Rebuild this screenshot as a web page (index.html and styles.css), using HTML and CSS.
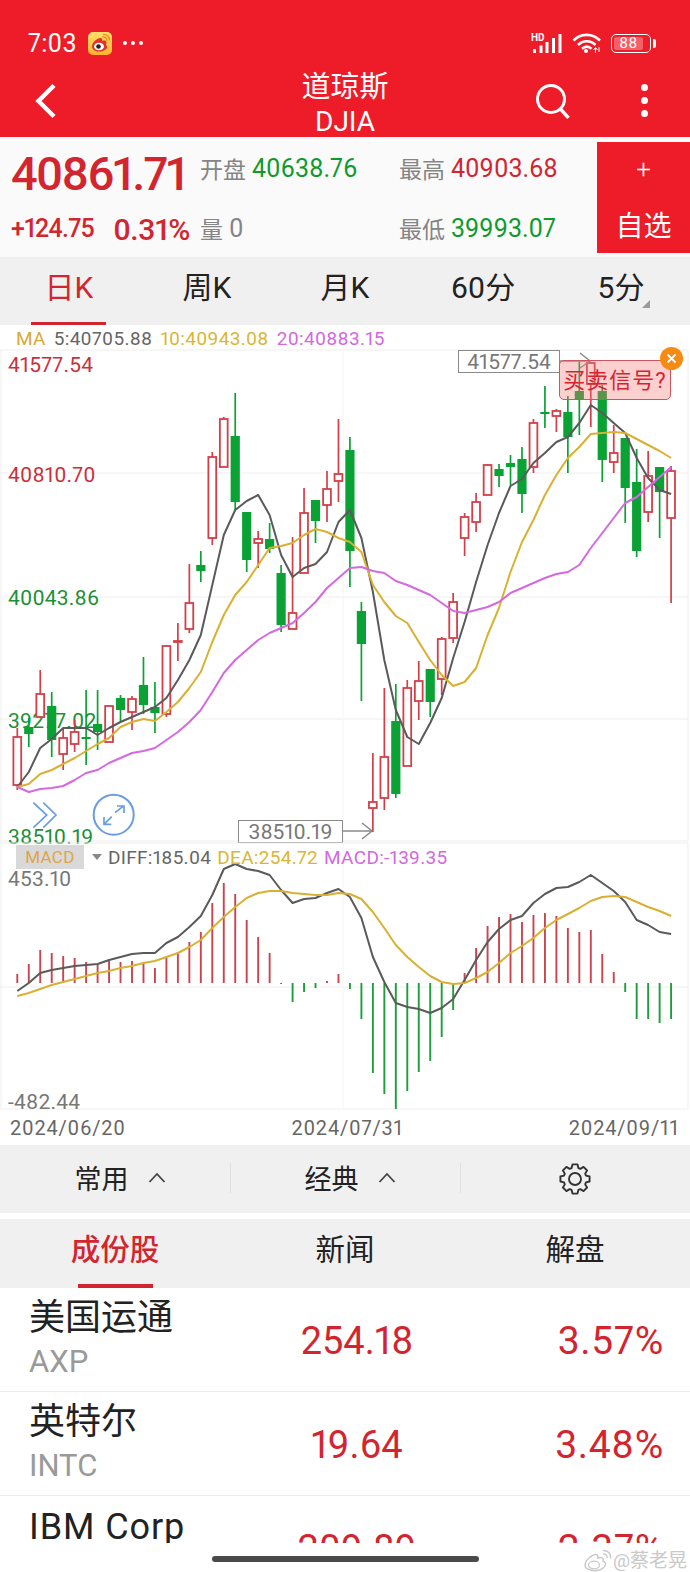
FILE: index.html
```html
<!DOCTYPE html>
<html lang="zh-CN">
  <head>
    <meta charset="UTF-8">
    <meta name="viewport" content="width=device-width, initial-scale=1.0">
    <title>道琼斯 DJIA</title>
    <link rel="stylesheet" href="styles.css">
  </head>
  <body>
    <header class="app-header">
      <div class="status-bar">
        <span class="status-time">7:03</span>
        <svg class="status-app" viewBox="0 0 24 23">
          <defs>
            <linearGradient id="tile" x1="0" y1="0" x2="0" y2="1">
              <stop offset="0" stop-color="#ffdf6b"/>
              <stop offset="1" stop-color="#ffb22c"/>
            </linearGradient>
          </defs>
          <rect width="24" height="23" rx="5" fill="url(#tile)"/>
          <path d="M4 14.5c0-4 5-8.5 8.5-8.5 1.7 0 2 1.5 1.5 3 2.400-.8 4.500-.4 4.500 1.500 0 .8-.4 1.300-.5 2 .8 1 1 1.800 1 2.500 0 2.500-4 4.500-7.500 4.500-4 0-7.500-2-7.500-5z" fill="#e2332b"/>
          <ellipse cx="11" cy="14.500" rx="5" ry="3.800" fill="#fff"/>
          <circle cx="10.500" cy="14.500" r="2.300" fill="#222"/>
          <path d="M15 5c2-.4 4 1.200 4 3.500M15.500 2.500c3.500-.4 6 2.300 6 5.500" fill="none" stroke="#f08a1c" stroke-width="1.300" stroke-linecap="round"/>
        </svg>
        <span class="status-dots">
          <i></i><i></i><i></i>
        </span>
        <span class="status-right">
          <svg class="status-signal" viewBox="0 0 34 22">
            <text class="hd-mark" x="0" y="8.500">HD</text>
            <rect x="2" y="17" width="3" height="4" fill="#fff"/>
            <rect x="8.500" y="13.500" width="3" height="7.500" fill="#fff"/>
            <rect x="14.500" y="10" width="3" height="11" fill="#fff"/>
            <rect x="21" y="6" width="3" height="15" fill="#fff"/>
            <rect x="27.500" y="2" width="3" height="19" fill="#fff"/>
          </svg>
          <svg class="status-wifi" viewBox="0 0 30 22">
            <path d="M1.500 8.500C8.500 1 20.500 1 28 8.500M6 13c5-5 12.500-5 17.500 0M10 16.800c3-2.800 6.500-2.800 9.500 0" fill="none" stroke="#fff" stroke-width="2.600"/>
            <circle cx="14" cy="19" r="2" fill="#fff"/>
            <path d="M23.500 21v-5M25.500 18l-2-2.500-2 2.500M27 15v5" fill="none" stroke="#fff" stroke-width="1"/>
          </svg>
          <span class="battery"><span class="battery-fill">88</span></span>
        </span>
      </div>
      <div class="nav-bar">
        <svg class="nav-back" viewBox="0 0 22 36">
          <path d="M19 2.500 3.500 18 19 33.500" fill="none" stroke="#fff" stroke-width="4.500"/>
        </svg>
        <div class="nav-title">
          <div class="nav-name">道琼斯</div>
          <div class="nav-code">DJIA</div>
        </div>
        <div class="nav-actions">
          <svg class="nav-search" viewBox="0 0 36 36">
            <circle cx="16" cy="16" r="13.500" fill="none" stroke="#fff" stroke-width="3"/>
            <path d="m25.500 26 8 9" fill="none" stroke="#fff" stroke-width="3.400"/>
          </svg>
          <span class="nav-more"><i></i><i></i><i></i></span>
        </div>
      </div>
    </header>

    <section class="quote">
      <div class="quote-price">40861.71</div>
      <div class="quote-cell"><span class="quote-label">开盘</span><span class="quote-value is-down">40638.76</span></div>
      <div class="quote-cell"><span class="quote-label">最高</span><span class="quote-value is-up">40903.68</span></div>
      <button class="quote-add">
        <span class="quote-add-plus">+</span>
        <span class="quote-add-text">自选</span>
      </button>
      <div class="quote-change">
        <span class="change-amount">+124.75</span>
        <span class="change-percent">0.31%</span>
      </div>
      <div class="quote-cell"><span class="quote-label">量</span><span class="quote-value is-muted">0</span></div>
      <div class="quote-cell"><span class="quote-label">最低</span><span class="quote-value is-down">39993.07</span></div>
    </section>

    <nav class="period-tabs">
      <div class="period-tab is-active">日K</div>
      <div class="period-tab">周K</div>
      <div class="period-tab">月K</div>
      <div class="period-tab">60分</div>
      <div class="period-tab has-corner">5分</div>
    </nav>

    <div class="ma-legend">
      <span class="c-gold-label">MA</span>
      <span class="c-grey">5:40705.88</span>
      <span class="c-gold">10:40943.08</span>
      <span class="c-purple">20:40883.15</span>
    </div>

    <div class="kline">
      <svg id="kline-chart" class="chart-svg" viewBox="0 349 690 492"></svg>
      <div class="price-tag tag-high">41577.54</div>
      <div class="price-tag tag-low">38510.19</div>
      <div class="signal-tip">买卖信号?</div>
      <svg class="signal-close" viewBox="0 0 23 23">
        <circle cx="11.500" cy="11.500" r="11.500" fill="#f78a12"/>
        <path d="m7.500 7.500 8 8m0-8-8 8" stroke="#fff" stroke-width="1.800"/>
      </svg>
    </div>

    <div class="macd">
      <svg id="macd-chart" class="chart-svg" viewBox="0 841 690 269"></svg>
      <div class="macd-legend">
        <span class="macd-badge">MACD</span>
        <i class="macd-caret"></i>
        <span class="c-grey">DIFF:185.04</span>
        <span class="c-gold">DEA:254.72</span>
        <span class="c-purple">MACD:-139.35</span>
      </div>
    </div>

    <div class="date-axis">
      <span>2024/06/20</span>
      <span>2024/07/31</span>
      <span>2024/09/11</span>
    </div>

    <div class="tool-bar">
      <div class="tool-item">
        常用
        <svg class="tool-caret" viewBox="0 0 18 11"><path d="m1.500 10 7.500-8 7.500 8" fill="none" stroke="#444" stroke-width="1.800"/></svg>
      </div>
      <div class="tool-item">
        经典
        <svg class="tool-caret" viewBox="0 0 18 11"><path d="m1.500 10 7.500-8 7.500 8" fill="none" stroke="#444" stroke-width="1.800"/></svg>
      </div>
      <div class="tool-item">
        <svg class="tool-gear" viewBox="0 0 32 32">
          <path id="gear-outline" fill="none" stroke="#333" stroke-width="1.900" stroke-linejoin="round"/>
          <circle cx="16" cy="16" r="6" fill="none" stroke="#333" stroke-width="1.900"/>
        </svg>
      </div>
    </div>

    <nav class="info-tabs">
      <div class="info-tab is-active">成份股</div>
      <div class="info-tab">新闻</div>
      <div class="info-tab">解盘</div>
    </nav>

    <div class="stock-list">
      <div class="stock-row">
        <div class="stock-name">
          <div class="stock-title">美国运通</div>
          <div class="stock-code">AXP</div>
        </div>
        <div class="stock-price">254.18</div>
        <div class="stock-pct">3.57%</div>
      </div>
      <div class="stock-row">
        <div class="stock-name">
          <div class="stock-title">英特尔</div>
          <div class="stock-code">INTC</div>
        </div>
        <div class="stock-price">19.64</div>
        <div class="stock-pct">3.48%</div>
      </div>
      <div class="stock-row">
        <div class="stock-name">
          <div class="stock-title is-latin">IBM Corp</div>
        </div>
        <div class="stock-price">209.89</div>
        <div class="stock-pct">2.37%</div>
      </div>
    </div>

    <footer class="page-foot">
      <div class="home-bar"></div>
      <div class="watermark">
        <svg class="watermark-logo" viewBox="0 0 30 24">
          <path d="M2 16c0-4.500 7-10.500 11-10.500 2 0 2.200 2 1.700 3.500 3-1 5.500-.5 5.500 1.700 0 .8-.4 1-.2 1.500 1.500.5 2.500 1.500 2.500 3 0 3-5 6.500-10.500 6.500C6.500 21.700 2 19.500 2 16z" fill="#fff" stroke="#c9c9c9" stroke-width="1.400"/>
          <ellipse cx="11" cy="16" rx="5.500" ry="3.800" fill="none" stroke="#c9c9c9" stroke-width="1.300"/>
          <path d="M20 5c2.500-.4 4.500 1.500 4 4M20 1.500c4.500-.6 8.500 3 7.500 8" fill="none" stroke="#c9c9c9" stroke-width="1.400"/>
        </svg>
        <span class="watermark-text">@蔡老晃</span>
      </div>
    </footer>

    <script src="chart.js"></script>
  </body>
</html>
```

FILE: styles.css
```css
:root {
  --red: #ed1c28;
  --up: #d3252f;
  --down: #0f9a2e;
  --grey: #666666;
  --gold: #d9b735;
  --purple: #d369e0;
  --panel: #f0f0f0;
  --line: #ececec;
}

html, body {
  margin: 0;
  padding: 0;
}

body {
  width: 690px;
  height: 1572px;
  overflow: hidden;
  background: #ffffff;
  color: #222222;
  font-family: Roboto, "Noto Sans CJK SC", sans-serif;
  font-variant-numeric: proportional-nums;
}

/* header */
.app-header {
  height: 137px;
  background: var(--red);
  color: white;
}

.status-bar {
  height: 42px;
  padding: 22px 35px 0 28px;
  display: flex;
  align-items: center;
}

.status-time {
  font-size: 25px;
  width: 60px;
  letter-spacing: 0.3px;
}

.status-app {
  width: 24px;
  height: 23px;
}

.status-dots {
  display: flex;
  gap: 4px;
  margin-left: 11px;
}

.status-dots i {
  width: 4px;
  height: 4px;
  border-radius: 50%;
  background: white;
}

.status-right {
  margin-left: auto;
  display: flex;
  align-items: center;
}

.status-signal {
  width: 34px;
  height: 22px;
}

.hd-mark {
  font-size: 10px;
  font-weight: 700;
  fill: white;
}

.status-wifi {
  width: 30px;
  height: 22px;
  margin-left: 7px;
}

.battery {
  position: relative;
  width: 38px;
  height: 17px;
  margin-left: 9px;
  margin-right: 4px;
  border: 1.500px solid white;
  border-radius: 5px;
  display: block;
}

.battery::after {
  content: "";
  position: absolute;
  right: -6px;
  top: 4px;
  width: 3px;
  height: 9px;
  border-radius: 0 2px 2px 0;
  background: white;
}

.battery-fill {
  display: block;
  margin: 2px;
  width: 29px;
  height: 13px;
  border-radius: 2px;
  background: rgba(255, 255, 255, 0.3);
  font-size: 15px;
  line-height: 13px;
  text-align: center;
  letter-spacing: 0.5px;
}

.nav-bar {
  height: 73px;
  display: grid;
  grid-template-columns: 1fr auto 1fr;
  align-items: center;
}

.nav-back {
  width: 22px;
  height: 36px;
  margin-left: 35px;
}

.nav-title {
  text-align: center;
}

.nav-name {
  font-size: 29px;
  line-height: 38px;
  margin-top: 4px;
}

.nav-code {
  font-size: 28px;
  line-height: 31px;
}

.nav-actions {
  display: flex;
  justify-content: flex-end;
  align-items: center;
  padding-right: 41px;
  gap: 70px;
}

.nav-search {
  width: 36px;
  height: 36px;
}

.nav-more {
  display: flex;
  flex-direction: column;
  gap: 6px;
  margin-right: 1px;
}

.nav-more i {
  width: 7px;
  height: 7px;
  border-radius: 50%;
  background: white;
}

/* quote */
.quote {
  height: 120px;
  background: #fafafa;
  display: grid;
  grid-template-columns: 200px 199px 198px 93px;
  grid-template-rows: 62px 58px;
}

.quote-price {
  padding-left: 11px;
  align-self: center;
  margin-top: 12px;
  font-size: 47px;
  font-weight: 500;
  line-height: 48px;
  letter-spacing: -1.900px;
  color: var(--up);
}

.quote-cell {
  display: flex;
  align-items: center;
  gap: 6px;
}

.quote-label {
  font-size: 23px;
  color: #858585;
}

.quote-value {
  font-size: 25px;
}

.is-up { color: var(--up); }
.is-down { color: var(--down); }
.is-muted { color: #858585; }

.quote-add {
  grid-column: 4;
  grid-row: 1 / 3;
  margin: 5px 0 4px;
  padding: 0;
  border: 0;
  background: var(--red);
  color: white;
  font-family: inherit;
  display: flex;
  flex-direction: column;
  align-items: center;
}

.quote-add-plus {
  font-size: 26px;
  font-weight: 300;
  line-height: 30px;
  margin-top: 12px;
}

.quote-add-text {
  font-size: 28px;
  line-height: 40px;
  margin-top: 23px;
}

.quote-change {
  padding-left: 11px;
  display: flex;
  align-items: center;
  gap: 19px;
  color: var(--up);
  font-weight: 500;
}

.change-amount {
  font-size: 25px;
  letter-spacing: -0.700px;
}

.change-percent {
  font-size: 30px;
  letter-spacing: -0.400px;
  margin-top: 3px;
}

/* period tabs */
.period-tabs {
  height: 68px;
  background: var(--panel);
  display: flex;
}

.period-tab {
  position: relative;
  flex: 1;
  padding-bottom: 4px;
  font-size: 30px;
  line-height: 62px;
  text-align: center;
}

.period-tab.is-active {
  color: var(--up);
}

.period-tab.is-active::after {
  content: "";
  position: absolute;
  left: 31px;
  bottom: 0;
  width: 75px;
  height: 3px;
  background: var(--up);
}

.period-tab.has-corner::after {
  content: "";
  position: absolute;
  right: 40px;
  top: 43px;
  width: 8px;
  height: 8px;
  background: #9a9a9a;
  clip-path: polygon(100% 0, 100% 100%, 0 100%);
}

/* legends */
.ma-legend {
  box-sizing: border-box;
  height: 24px;
  padding: 3px 0 0 16px;
  display: flex;
  align-items: center;
  gap: 8px;
  font-size: 19px;
  letter-spacing: 0.300px;
}

.c-grey { color: var(--grey); }
.c-gold { color: var(--gold); }
.c-gold-label { color: #d9a93a; }
.c-purple { color: var(--purple); }

/* charts */
.chart-svg {
  display: block;
  width: 690px;
  overflow: visible;
}

.kline {
  position: relative;
  height: 492px;
}

.kline .chart-svg {
  height: 492px;
}

.chart-label {
  font-size: 21px;
  letter-spacing: 0.200px;
}

.price-tag {
  position: absolute;
  box-sizing: border-box;
  border: 1px solid #8a8a8a;
  background: white;
  color: #777777;
  font-size: 21px;
  line-height: 22px;
  text-align: center;
}

.tag-high {
  left: 458px;
  top: 1px;
  width: 102px;
  height: 23px;
}

.tag-low {
  left: 238px;
  top: 471px;
  width: 105px;
  height: 23px;
}

.signal-tip {
  position: absolute;
  left: 559px;
  top: 11px;
  box-sizing: border-box;
  width: 112px;
  height: 40px;
  border: 1px solid #c9575f;
  border-radius: 5px;
  background: rgba(250, 120, 120, 0.35);
  color: #d8232f;
  font-size: 22px;
  line-height: 39px;
  letter-spacing: 1px;
  text-align: center;
}

.signal-close {
  position: absolute;
  left: 660px;
  top: -2px;
  width: 23px;
  height: 23px;
}

.macd {
  position: relative;
  height: 269px;
}

.macd .chart-svg {
  height: 269px;
}

.macd-legend {
  position: absolute;
  left: 16px;
  top: 4px;
  height: 24px;
  display: flex;
  align-items: center;
  font-size: 19px;
  letter-spacing: 0.300px;
  gap: 6px;
}

.macd-badge {
  width: 68px;
  height: 24px;
  background: #d9d9d9;
  color: #dfa548;
  font-size: 17px;
  line-height: 24px;
  text-align: center;
}

.macd-caret {
  width: 0;
  height: 0;
  margin: 0 0 0 2px;
  border: 5px solid transparent;
  border-top: 6px solid #888888;
  border-bottom: 0;
}

.date-axis {
  height: 35px;
  padding: 0 11px 0 10px;
  display: flex;
  justify-content: space-between;
  align-items: center;
  color: var(--grey);
  font-size: 20px;
  letter-spacing: 0.800px;
}

/* tool bar */
.tool-bar {
  height: 68px;
  background: var(--panel);
  display: flex;
}

.tool-item {
  position: relative;
  flex: 1;
  display: flex;
  justify-content: center;
  align-items: center;
  gap: 19px;
  padding: 0 0 3px 10px;
  font-size: 27px;
}

.tool-item + .tool-item::before {
  content: "";
  position: absolute;
  left: 0;
  top: 18px;
  height: 30px;
  border-left: 1px solid #e0e0e0;
}

.tool-caret {
  width: 18px;
  height: 11px;
}

.tool-gear {
  width: 32px;
  height: 32px;
  margin: 3px 0 0 -10px;
}

/* info tabs */
.info-tabs {
  margin-top: 6px;
  height: 69px;
  background: var(--panel);
  display: flex;
}

.info-tab {
  position: relative;
  flex: 1;
  padding-bottom: 5px;
  font-size: 29.500px;
  line-height: 62px;
  text-align: center;
}

.info-tab.is-active {
  color: var(--up);
  font-weight: 500;
}

.info-tab.is-active::after {
  content: "";
  position: absolute;
  left: 78px;
  bottom: 0;
  width: 75px;
  height: 4px;
  background: var(--up);
}

/* stock list */
.stock-list {
  height: 255px;
  overflow: hidden;
}

.stock-row {
  box-sizing: border-box;
  height: 104px;
  padding: 0 26px 0 29px;
  border-bottom: 1px solid var(--line);
  display: grid;
  grid-template-columns: 225px 206px 1fr;
  align-items: center;
}

.stock-name {
  align-self: start;
  padding-top: 7px;
}

.stock-title {
  font-size: 36px;
  line-height: 46px;
}

.stock-title.is-latin {
  letter-spacing: 0.900px;
  padding-top: 1px;
}

.stock-code {
  font-size: 31px;
  line-height: 42px;
  color: #9a9a9a;
}

.stock-price {
  margin-top: 2px;
  font-size: 38px;
  letter-spacing: 0;
  color: var(--up);
  text-align: center;
}

.stock-pct {
  margin-top: 2px;
  font-size: 39px;
  letter-spacing: 0.700px;
  color: var(--up);
  text-align: right;
}

/* foot */
.page-foot {
  position: relative;
  height: 29px;
}

.home-bar {
  position: absolute;
  left: 212px;
  top: 13px;
  width: 267px;
  height: 6px;
  border-radius: 3px;
  background: #4a4a4a;
}

.watermark {
  position: absolute;
  left: 583px;
  top: 6px;
  display: flex;
  align-items: center;
  color: #c9c9c9;
}

.watermark-logo {
  width: 30px;
  height: 24px;
}

.watermark-text {
  font-size: 19px;
  line-height: 22px;
  white-space: nowrap;
}
```

FILE: chart.js
```js
// all y values are page pixels, read straight off the chart
const STEP = 11.47;
const xAt = (i) => 17.3 + STEP * i;

// color, body top, body bottom, wick top, wick bottom
const candles = [
  ["r", 737, 785, 728, 790], ["g", 727, 734, 718, 747], ["r", 694, 717, 670, 718],
  ["g", 706, 740, 692, 757], ["r", 738, 754, 728, 770], ["r", 732, 744, 720, 752],
  ["g", 737, 739, 690, 765], ["g", 724, 732, 690, 750], ["r", 706, 742, 706, 742],
  ["g", 698, 710, 695, 722], ["r", 699, 712, 696, 730], ["g", 685, 705, 657, 714],
  ["g", 707, 713, 682, 733], ["r", 646, 714, 645, 717], ["r", 641, 642, 623, 661],
  ["r", 603, 629, 564, 633], ["g", 565, 571, 551, 582], ["r", 457, 538, 452, 545],
  ["r", 419, 467, 417, 467], ["g", 436, 502, 393, 510], ["g", 512, 560, 512, 572],
  ["r", 539, 543, 531, 568], ["g", 539, 549, 523, 553], ["g", 573, 625, 565, 632],
  ["r", 613, 629, 537, 629], ["r", 513, 573, 488, 573], ["g", 500, 521, 500, 543],
  ["r", 489, 505, 471, 522], ["r", 474, 481, 419, 502], ["g", 450, 551, 437, 587],
  ["g", 611, 644, 602, 701], ["r", 802, 808, 753, 832], ["r", 757, 798, 688, 810],
  ["g", 721, 794, 684, 798], ["r", 688, 766, 680, 766], ["r", 681, 701, 661, 720],
  ["g", 669, 702, 669, 717], ["r", 639, 679, 637, 695], ["r", 602, 638, 593, 643],
  ["r", 517, 538, 513, 556], ["r", 502, 522, 493, 532], ["r", 465, 495, 464, 495],
  ["g", 469, 476, 464, 487], ["g", 463, 467, 455, 485], ["g", 459, 494, 447, 513],
  ["r", 423, 467, 419, 473], ["g", 412, 414, 386, 428], ["r", 411, 416, 409, 432],
  ["g", 412, 437, 396, 473], ["g", 391, 399, 362, 435], ["r", 363, 384, 362, 427],
  ["g", 391, 460, 385, 482], ["r", 453, 462, 425, 473], ["g", 438, 488, 438, 523],
  ["g", 482, 551, 449, 557], ["r", 476, 512, 451, 522], ["g", 467, 492, 467, 538],
  ["r", 471, 518, 466, 603],
];

const ma5 = [787, 772, 748, 739, 728, 728, 728, 735, 728, 722, 717, 712, 707, 698, 680, 660, 635, 585, 535, 510, 501, 495, 515, 555, 577, 568, 564, 552, 522, 510, 538, 592, 660, 710, 737, 744, 723, 698, 658, 622, 582, 545, 513, 486, 479, 463, 453, 442, 437, 423, 405, 413, 423, 433, 458, 478, 490, 494];
const ma10 = [787, 784, 774, 770, 764, 758, 751, 744, 738, 727, 722, 719, 721, 712, 702, 688, 672, 642, 615, 595, 582, 565, 548, 546, 543, 535, 529, 532, 538, 542, 552, 585, 602, 616, 623, 642, 660, 675, 686, 682, 668, 635, 608, 572, 542, 520, 495, 475, 458, 447, 434, 433, 432, 433, 439, 445, 451, 458];
const ma20 = [787, 792, 789, 788, 786, 780, 773, 770, 763, 758, 753, 751, 748, 740, 732, 722, 710, 692, 673, 660, 650, 640, 633, 628, 623, 613, 602, 588, 578, 568, 567, 571, 573, 581, 585, 590, 595, 603, 611, 613, 610, 607, 602, 593, 588, 583, 578, 574, 572, 565, 548, 533, 518, 503, 497, 487, 477, 467];

const macdBars = [974, 964, 950, 953, 956, 958, 962, 964, 961, 962, 961, 963, 968, 957, 952, 942, 932, 903, 883, 894, 920, 937, 953, 984, 1002, 992, 988, 981, 974, 989, 1019, 1073, 1094, 1109, 1091, 1072, 1061, 1037, 1010, 973, 948, 926, 917, 914, 922, 915, 913, 916, 928, 932, 930, 954, 972, 992, 1019, 1019, 1023, 1019];
const diff = [991, 983, 973, 970, 968, 966, 965, 964, 960, 957, 954, 953, 953, 943, 937, 927, 916, 895, 869, 864, 869, 871, 875, 890, 903, 899, 898, 893, 889, 897, 918, 957, 982, 1003, 1007, 1009, 1013, 1008, 999, 980, 960, 942, 929, 920, 916, 903, 894, 888, 887, 882, 875, 883, 891, 902, 920, 925, 932, 934];
const dea = [996, 993, 989, 985, 982, 979, 976, 973, 971, 968, 966, 963, 961, 957, 953, 947, 940, 928, 917, 907, 898, 893, 891, 891, 893, 894, 895, 895, 893, 894, 899, 912, 928, 945, 957, 967, 976, 982, 984, 983, 978, 972, 963, 953, 946, 938, 928, 920, 914, 908, 901, 897, 896, 897, 902, 907, 911, 916];

const RED = "#d23f49";
const GREEN = "#0ba235";
const MACD_ZERO = 983;

const polyline = (values, color) => {
  const points = values.map((y, i) => `${xAt(i).toFixed(1)},${y}`).join(" ");
  return `<polyline points="${points}" fill="none" stroke="${color}" stroke-width="2" stroke-linejoin="round"/>`;
};

const gridLine = (x1, y1, x2, y2, color = "#eeeeee") =>
  `<line x1="${x1}" y1="${y1}" x2="${x2}" y2="${y2}" stroke="${color}" stroke-width="1"/>`;

const label = (text, y, color) =>
  `<text class="chart-label" x="8" y="${y}" fill="${color}">${text}</text>`;

function renderCandle([kind, top, bottom, wickTop, wickBottom], i) {
  const x = xAt(i);
  const color = kind === "r" ? RED : GREEN;
  const wick = `<line x1="${x}" y1="${wickTop}" x2="${x}" y2="${wickBottom}" stroke="${color}" stroke-width="1.700"/>`;
  if (kind === "g") {
    return `${wick}<rect x="${x - 4.6}" y="${top}" width="9.200" height="${bottom - top}" fill="${color}"/>`;
  }
  return `${wick}<rect x="${x - 3.9}" y="${top}" width="7.800" height="${bottom - top}" fill="#fff" stroke="${color}" stroke-width="1.800"/>`;
}

function renderKline() {
  const blue = "#6a9de0";
  document.getElementById("kline-chart").innerHTML = `
    ${gridLine(0, 350, 688, 350)}
    ${gridLine(0, 473, 688, 473)}
    ${gridLine(0, 597, 688, 597)}
    ${gridLine(0, 719, 688, 719)}
    ${gridLine(0, 841, 688, 841)}
    ${gridLine(1, 350, 1, 841)}
    ${gridLine(688, 350, 688, 841)}
    ${gridLine(343, 350, 343, 841, "#f6f6f6")}
    ${label("41577.54", 372, "#c9303a")}
    ${label("40810.70", 482, "#c9303a")}
    ${label("40043.86", 605, "#1d8f36")}
    ${label("39277.02", 728, "#1d8f36")}
    ${label("38510.19", 844, "#1d8f36")}
    ${candles.map(renderCandle).join("")}
    ${polyline(ma5, "#5a5a5a")}
    ${polyline(ma10, "#d9b032")}
    ${polyline(ma20, "#d469e0")}
    <path d="M560 361h30m-10-8 10 8-10 7M343 831h29m-10-8 10 8-10 8" fill="none" stroke="#8a8a8a" stroke-width="1.500"/>
    <g fill="none" stroke="${blue}" stroke-width="1.700">
      <path d="M33.300 802.700 46.700 815l-13.400 12.700M43.300 802.700 56 815l-12.700 12.700"/>
      <circle cx="113.700" cy="814.700" r="20" stroke-width="2"/>
      <path d="m115 812.700 9-7m-7 .3h7v7M111.700 816.700l-7.700 7.600m0-7.300v7.300h7.300"/>
    </g>`;
}

function renderMacd() {
  const bars = macdBars.map((y, i) => {
    const x = xAt(i);
    const color = y < MACD_ZERO ? "#c8444e" : "#1b9e3b";
    return `<line x1="${x}" y1="${MACD_ZERO}" x2="${x}" y2="${y}" stroke="${color}" stroke-width="1.900"/>`;
  });
  document.getElementById("macd-chart").innerHTML = `
    ${gridLine(0, 843, 688, 843)}
    ${gridLine(0, 987, 688, 987)}
    ${gridLine(0, 1109, 688, 1109)}
    ${gridLine(1, 843, 1, 1109)}
    ${gridLine(688, 843, 688, 1109)}
    ${gridLine(343, 843, 343, 1109, "#f6f6f6")}
    <text class="chart-label" x="8" y="886" fill="#777">453.10</text>
    <text class="chart-label" x="8" y="1109" fill="#777">-482.44</text>
    ${bars.join("")}
    ${polyline(diff, "#5a5a5a")}
    ${polyline(dea, "#d9b032")}`;
}

function renderGear() {
  const center = 16;
  const teeth = 8;
  const points = [];
  for (let t = 0; t < teeth; t++) {
    const base = (t / teeth) * Math.PI * 2;
    [[-0.3, 11.5], [-0.17, 14.8], [0.17, 14.8], [0.3, 11.5]].forEach(([offset, r]) => {
      const angle = base + offset;
      points.push(`${(center + r * Math.cos(angle)).toFixed(2)} ${(center + r * Math.sin(angle)).toFixed(2)}`);
    });
  }
  document.getElementById("gear-outline").setAttribute("d", `M${points.join("L")}Z`);
}

renderKline();
renderMacd();
renderGear();
```
